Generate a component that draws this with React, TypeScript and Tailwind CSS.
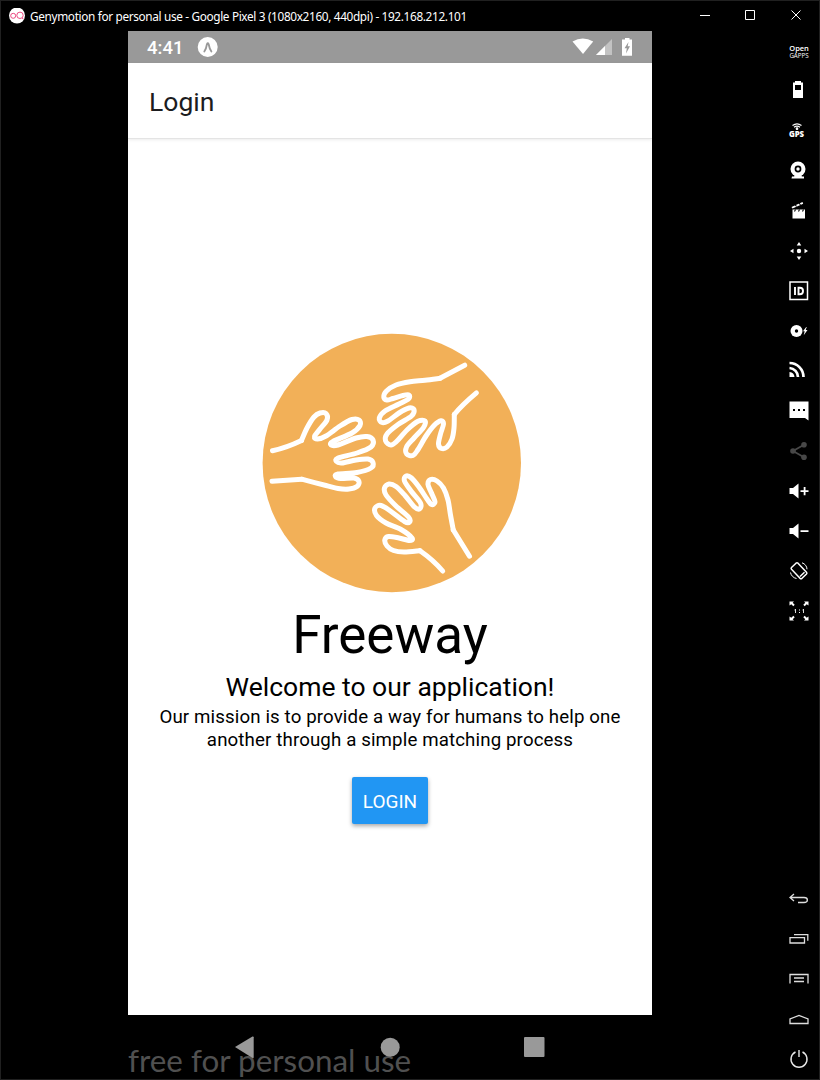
import type { ReactNode } from "react";

type Pt = [number, number];

// Catmull-Rom spline through the given points, as a cubic path.
function smooth(points: Pt[]): string {
  let d = `M${points[0][0]} ${points[0][1]}`;
  for (let i = 0; i < points.length - 1; i++) {
    const a = points[Math.max(0, i - 1)];
    const b = points[i];
    const c = points[i + 1];
    const e = points[Math.min(points.length - 1, i + 2)];
    d += `C${b[0] + (c[0] - a[0]) / 6} ${b[1] + (c[1] - a[1]) / 6} ${c[0] - (e[0] - b[0]) / 6} ${c[1] - (e[1] - b[1]) / 6} ${c[0]} ${c[1]}`;
  }
  return d;
}

const leftHand: Pt[] = [
  [301.5, 440.5], [307, 428], [314, 417], [320, 413], [326, 413.5], [327, 420], [320, 429], [314.5, 436.5], [317.5, 439],
  [326, 436], [340, 426], [352, 419.5], [359, 420], [360, 425.5], [352, 433], [333, 441.5], [331, 445], [338, 445],
  [356, 438], [367, 436.5], [373, 440], [371, 447], [357, 453], [338, 458], [336.5, 461.5], [342, 463], [356, 460],
  [368, 459], [373, 462.5], [371, 468], [357, 472.5], [338, 474], [335.5, 476.5], [341, 478.5], [354, 478], [359, 481.5],
  [357, 486.5], [349, 489], [338, 488.5], [326, 485.5], [301.7, 479.2],
];
const topHand: Pt[] = [
  [440, 378.3], [425, 380.3], [410, 381.7], [396, 385], [386.5, 391], [383.8, 397], [387, 400], [393, 398.5], [403, 395.5],
  [409, 395], [408.5, 399], [399, 404], [385, 411], [379.3, 418], [382, 422.5], [388, 421], [399, 413], [409, 408], [414, 409.5],
  [411.5, 416], [398, 424.5], [387, 434], [385.6, 441], [391, 445], [396.5, 441.5], [407, 430], [418, 421.3], [425, 421],
  [423.5, 427.5], [414, 438], [406.5, 447], [406.7, 454], [413, 455.5], [418, 449.5], [426, 436], [434, 425.5], [441, 420.8],
  [443.5, 424], [440.5, 434], [438.5, 444], [441.5, 448.5], [447, 447], [452, 439], [454, 428], [454.3, 414.5],
];
const bottomHand: Pt[] = [
  [453.3, 530], [450.5, 515], [448, 500], [443.5, 488], [437, 481], [430.5, 479.5], [428, 484.5], [431.5, 493], [435, 502],
  [431.5, 504.5], [427, 499], [419, 487], [411.5, 478], [406, 476], [404.5, 481], [411, 491], [420.5, 503], [419.5, 509],
  [414.5, 507], [405, 495.5], [396, 486.5], [389, 484], [384.5, 488], [386, 495], [396, 506], [408.5, 517], [409.5, 522],
  [404.5, 521.5], [391, 511.5], [381, 505.5], [375, 508], [376.5, 515.5], [386, 523], [401, 529.5], [412, 538], [409.5, 540.5],
  [399, 538], [388.5, 536.5], [384.8, 540], [387, 546], [393.5, 550.5], [404, 552], [420, 550.7],
];

function HandsLogo() {
  return (
    <svg className="ml-1 h-[260px] w-[260px] shrink-0" viewBox="262 333 260 260" aria-hidden="true">
      <circle cx="391.8" cy="463" r="129.2" fill="#f2b058" />
      <g fill="none" stroke="#fff" strokeWidth="5" strokeLinecap="round" strokeLinejoin="round">
        <path d="M272.5 450.7Q286 448 301.5 440.5" />
        <path d={smooth(leftHand)} />
        <path d="M301.7 479.2L272 481.3" />
        <path d="M464.7 365.2L440 378.3" />
        <path d={smooth(topHand)} />
        <path d="M454.3 414.5C461 406 468 400 476.4 392.9" />
        <path d="M469.5 556.2L453.3 530" />
        <path d={smooth(bottomHand)} />
        <path d="M420 550.7C429 557 436 563 442.7 571" />
      </g>
    </svg>
  );
}

function ToolIcon({ children }: { children: ReactNode }) {
  return (
    <svg className="h-10 w-6 shrink-0" viewBox="0 0 24 40" fill="#fff" stroke="none" aria-hidden="true">
      {children}
    </svg>
  );
}

function Toolbar() {
  return (
    <aside className="flex w-[33px] shrink-0 flex-col justify-between pt-px">
      <div className="flex flex-col">
        <div className="flex h-[38px] w-6 flex-col items-center justify-center pl-[2px] font-['Open_Sans',sans-serif] text-white">
          <span className="text-[7.5px] font-semibold leading-[8px] tracking-[-0.1px]">Open</span>
          <span className="text-[6.2px] font-medium leading-[7px]">GAPPS</span>
        </div>
        <ToolIcon>
          <path fillRule="evenodd" d="M9 11h6v1.500h2V28H7V12.500h2zM9 15h6v5H9z" />
        </ToolIcon>
        <div className="flex h-10 w-6 flex-col items-center justify-center pr-[3px] text-white">
          <svg className="h-[7px] w-[10px]" viewBox="0 0 10 7" fill="none" stroke="currentColor" strokeWidth="1.1">
            <path d="M.5 2.5Q5-.8 9.500 2.500M2 4.300Q5 2 8 4.300" />
            <circle cx="5" cy="5.700" r=".8" fill="currentColor" />
          </svg>
          <span className="font-['Open_Sans',sans-serif] text-[7.8px] font-extrabold leading-[8px]">GPS</span>
        </div>
        <ToolIcon>
          <path d="M6 26.500h12v2H5.500zM9 24h6l1 3H8z" />
          <circle cx="12" cy="19" r="7.500" />
          <circle cx="12" cy="19" r="3.400" fill="#000" />
          <circle cx="12" cy="19" r="1.700" />
        </ToolIcon>
        <ToolIcon>
          <path d="M6.500 19.500h12.500v9H6.500zM5.500 17l11-5 .7 1.800L6.500 18.500z" />
          <path d="M9 14.500l1.500 2M13 13l1.500 2M9.500 19.500l-1 2M13.500 19.500l-1 2M17.500 19.500l-1 2" stroke="#000" strokeWidth="1.100" />
        </ToolIcon>
        <ToolIcon>
          <path d="M13 12l2.300 3.500h-4.600zM13 30l2.300-3.500h-4.600zM4 21l3.500-2.200v4.400zM22 21l-3.500-2.200v4.400z" />
          <circle cx="13" cy="21" r="2.200" />
        </ToolIcon>
        <ToolIcon>
          <path d="M4 12h17.500v17.500H4z" fill="none" stroke="#fff" strokeWidth="1.500" />
          <path d="M9 17v8M12.500 17.800h1.300c4.300 0 4.300 6.500 0 6.500h-1.300z" fill="none" stroke="#fff" strokeWidth="1.900" />
        </ToolIcon>
        <ToolIcon>
          <circle cx="10.500" cy="21" r="6" />
          <circle cx="10.500" cy="21" r="1.700" fill="#000" />
          <path d="M20.200 17l-3.200 4.300h1.700l-1 4 3.800-5.200h-1.800l1-3z" />
        </ToolIcon>
        <ToolIcon>
          <path d="M3.500 18a9 9 0 0 1 8.500 9M3.500 13a14 14 0 0 1 14 14" fill="none" stroke="#fff" strokeWidth="2.700" />
          <path d="M3.500 22a5.500 5.500 0 0 1 5 5h-5z" />
        </ToolIcon>
        <ToolIcon>
          <path d="M3.500 11.500h19v19L19 28H3.500z" />
          <path d="M7 19h2v2H7zM12 19h2v2h-2zM17 19h2v2h-2z" fill="#000" />
        </ToolIcon>
        <ToolIcon>
          <g fill="#484848"><circle cx="7" cy="21" r="2.800" /><circle cx="18" cy="14.700" r="2.800" /><circle cx="18" cy="27.300" r="2.800" /></g>
          <path d="M18 14.700L7 21l11 6.300" fill="none" stroke="#484848" strokeWidth="1.800" />
        </ToolIcon>
        <ToolIcon>
          <path d="M3.500 18H7l5.500-4.500v15L7 24H3.500zM14.500 20.200h3.200V17h1.800v3.200h3V22h-3v3.200h-1.800V22h-3.200z" />
        </ToolIcon>
        <ToolIcon>
          <path d="M3.500 18H7l5.500-4.500v15L7 24H3.500zM14.500 20.200h8V22h-8z" />
        </ToolIcon>
        <ToolIcon>
          <g fill="none" stroke="#fff" strokeWidth="1.500">
            <path d="M5.500 17.500l4.500-4.300q1-.7 2 0l8.500 9q.8 1 0 1.800l-4.500 4.300q-1 .7-2 0l-8.500-9q-.8-1 0-1.800zM14 26.500l4.500-4.300" strokeLinejoin="round" />
            <path d="M16 12.800c3 1 5 3.500 5 6.500M4.500 22.500c.5 3 3 5.500 6 6" strokeWidth="1" />
          </g>
        </ToolIcon>
        <ToolIcon>
          <path d="M3.500 11.500H8l-1.300 1.300 2 2-1.400 1.400-2-2L3.500 15.500zM22.500 11.500H18l1.300 1.300-2 2 1.400 1.400 2-2 1.800 1.300zM3.500 30.500H8l-1.300-1.300 2-2-1.400-1.400-2 2L3.500 26.500zM22.500 30.500H18l1.300-1.300-2-2 1.400-1.400 2 2 1.800-1.300z" />
          <path d="M9.500 19v4M17.500 19v4M8.500 20h1M16.500 20h1" stroke="#ddd" strokeWidth="1" />
          <path d="M13 19.500h1v1h-1zM13 22h1v1h-1z" />
        </ToolIcon>
      </div>
      <div className="flex flex-col">
        <ToolIcon>
          <path d="M8 15l-4 3.500L8 22M4 18.500h14c4.500 0 4.500 5 0 5h-6" fill="none" stroke="#ddd" strokeWidth="1.300" />
        </ToolIcon>
        <ToolIcon>
          <path d="M4 18.700h14.500v5.300H4zM8 15.700h13.800v6" fill="none" stroke="#ddd" strokeWidth="1.300" />
        </ToolIcon>
        <ToolIcon>
          <path d="M4 24.500v-9h18v9M8 19h10M8 22.500h10" fill="none" stroke="#ddd" strokeWidth="1.300" />
        </ToolIcon>
        <ToolIcon>
          <path d="M4 24.500v-4.500l9-3.500 9 3.500v4.500z" fill="none" stroke="#ddd" strokeWidth="1.300" />
        </ToolIcon>
        <ToolIcon>
          <path d="M9.500 13a8 8 0 1 0 7 0M13 11v7" fill="none" stroke="#e8e8e8" strokeWidth="1.400" />
        </ToolIcon>
      </div>
    </aside>
  );
}

function TitleBar() {
  return (
    <header className="flex h-[30px] shrink-0 items-center pl-2 text-white">
      <svg className="h-4 w-4" viewBox="0 0 16 16" aria-hidden="true">
        <circle cx="8" cy="7.500" r="8" fill="#fff" />
        <g fill="none" stroke="#ed4c83" strokeWidth="1">
          <circle cx="4.200" cy="7.800" r="2.500" />
          <circle cx="11" cy="7.300" r="3.200" />
          <path d="M13 10l1.500 1" />
        </g>
      </svg>
      <h1 className="mb-px ml-[5px] whitespace-nowrap font-['Noto_Sans',sans-serif] text-[11.8px] leading-4 tracking-[-0.345px]">
        Genymotion for personal use - Google Pixel 3 (1080x2160, 440dpi) - 192.168.212.101
      </h1>
      <svg className="mb-[2px] ml-auto h-[14px] w-[120px]" viewBox="699 8 120 14" fill="none" stroke="#fff" strokeWidth="1" aria-hidden="true">
        <path d="M700 15.500h10M745.500 10.500h9v9h-9zM791.500 10.500l9 9M800.500 10.500l-9 9" />
      </svg>
    </header>
  );
}

function StatusBar() {
  return (
    <div className="flex h-8 shrink-0 items-center bg-[#999] pl-[19px] text-white">
      <span className="pt-px text-[18.5px] font-medium leading-8">4:41</span>
      <svg className="ml-auto h-8 w-[455px]" viewBox="197 31 455 32" aria-hidden="true">
        <circle cx="207.700" cy="47" r="10" fill="#fff" />
        <path d="M204.300 51.500q2-3 2.700-7.500.8-1.800 1.600 0 .8 4.500 2.800 7.500" fill="none" stroke="#999" strokeWidth="1.800" strokeLinecap="round" />
        <path d="M572.500 41.500q10.300-6 20.700 0L583 54z" fill="#fff" />
        <path d="M612 39v16h-16z" fill="#c3c3c3" />
        <path d="M605 46v9h-9z" fill="#fff" />
        <path d="M625 38h4.500v1.500h2.500v16.300h-10V39.500h3z" fill="#fff" />
        <path d="M628.500 42l-4 6.200h2.300l-.8 5.300 4-7.200h-2.300z" fill="#999" />
      </svg>
    </div>
  );
}

export default function App() {
  return (
    <div className="flex h-[1080px] w-[820px] flex-col overflow-hidden border border-[#202020] bg-black font-[Roboto,sans-serif]">
      <TitleBar />
      <div className="flex min-h-0 flex-1 justify-between pl-[127px]">
        <div className="flex w-[524px] flex-col">
          <main className="flex h-[984px] flex-col bg-white text-black">
            <StatusBar />
            <div className="flex h-[76px] shrink-0 items-center border-b border-[#e4e4e4] pl-[21px] pt-[2px] text-[26.5px] text-[#1c1c1e] shadow-[0_1px_3px_rgba(0,0,0,0.080)]">
              <h2>Login</h2>
            </div>
            <section className="flex flex-1 flex-col items-center pt-[194px]">
              <HandsLogo />
              <h3 className="mt-[10px] text-[53px] leading-[64px]">Freeway</h3>
              <p className="mt-[4px] text-[26.5px] leading-[31px]">Welcome to our application!</p>
              <p className="mt-[4px] whitespace-nowrap text-center text-[18.7px] leading-[22.5px] tracking-[0.12px]">
                Our mission is to provide a way for humans to help one
                <br />
                another through a simple matching process
              </p>
              <button className="mt-[26px] h-[47px] w-[76px] rounded-[2px] bg-[#2196f3] pt-[3px] text-[19px] text-white shadow-[0_2px_4px_rgba(0,0,0,0.350)]">
                LOGIN
              </button>
            </section>
          </main>
          <footer className="relative h-[64px]">
            <span className="absolute left-0 top-[26px] whitespace-nowrap font-[Lato,sans-serif] text-[31.4px] leading-[38px] text-[#505050]">
              free for personal use
            </span>
            <svg className="absolute left-0 top-0 h-[64px] w-[524px]" viewBox="128 1015 524 64" fill="#999" aria-hidden="true">
              <path d="M235 1047l17.500-10.500q1.200-.3 1.200.8v20q0 1.200-1.200.8z" />
              <circle cx="390.200" cy="1047.200" r="9.500" />
              <rect x="524" y="1037" width="20.500" height="20" rx="1" />
            </svg>
          </footer>
        </div>
        <Toolbar />
      </div>
    </div>
  );
}
